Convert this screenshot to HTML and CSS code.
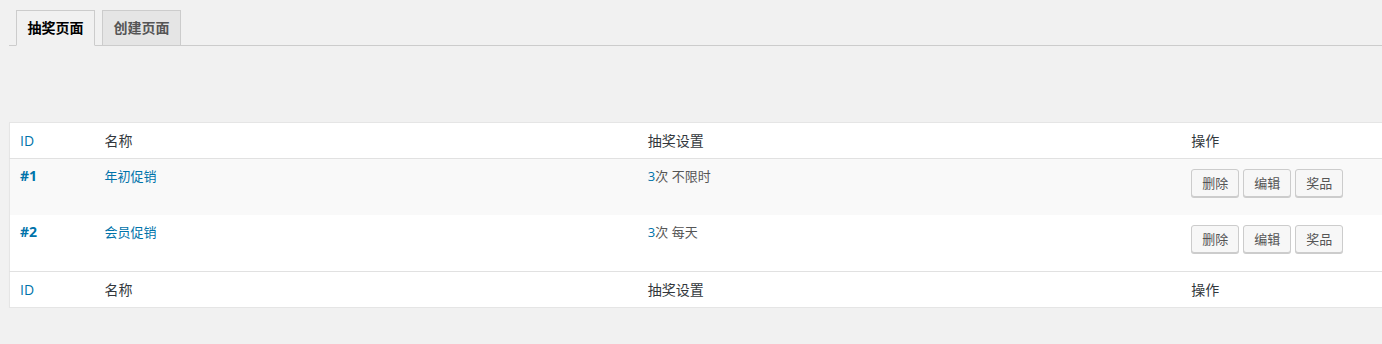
FILE: index.html
```html
<!DOCTYPE html>
<html lang="zh">
<head>
<meta charset="utf-8">
<title>抽奖页面</title>
<link rel="stylesheet" href="styles.css">
</head>
<body>
<div class="wrap">
  <div class="nav-tab-wrapper">
    <a class="nav-tab nav-tab-active">抽奖页面</a>
    <a class="nav-tab">创建页面</a>
  </div>
  <table class="list-table">
    <colgroup>
      <col class="c-id"><col class="c-wide"><col class="c-wide"><col class="c-wide">
    </colgroup>
    <thead>
      <tr><th class="sort">ID</th><th>名称</th><th>抽奖设置</th><th>操作</th></tr>
    </thead>
    <tbody>
      <tr class="alt">
        <td><a class="id-link">#1</a></td>
        <td><a class="name-link">年初促销</a></td>
        <td class="setting"><span class="num">3</span>次 不限时</td>
        <td class="actions"><div class="btns"><span class="button">删除</span><span class="button">编辑</span><span class="button">奖品</span></div></td>
      </tr>
      <tr>
        <td><a class="id-link">#2</a></td>
        <td><a class="name-link">会员促销</a></td>
        <td class="setting"><span class="num">3</span>次 每天</td>
        <td class="actions"><div class="btns"><span class="button">删除</span><span class="button">编辑</span><span class="button">奖品</span></div></td>
      </tr>
    </tbody>
    <tfoot>
      <tr><th class="sort">ID</th><th>名称</th><th>抽奖设置</th><th>操作</th></tr>
    </tfoot>
  </table>
</div>
</body>
</html>
```
FILE: styles.css
```css
html, body {
  margin: 0;
  padding: 0;
  background: #f1f1f1;
  overflow: hidden;
}
body {
  font-family: "Open Sans", "Noto Sans CJK SC", "Liberation Sans", sans-serif;
  color: #444;
  font-size: 13px;
}
.wrap {
  padding: 10px 0 0 9px;
  width: 1800px;
}
.nav-tab-wrapper {
  display: flex;
  align-items: flex-end;
  border-bottom: 1px solid #ccc;
  padding-left: 7px;
  gap: 7px;
  width: 1373px;
}
.nav-tab {
  display: block;
  box-sizing: border-box;
  height: 35px;
  width: 79px;
  text-align: center;
  border: 1px solid #ccc;
  border-bottom: none;
  background: #e5e5e5;
  color: #555;
  font-size: 14px;
  font-weight: 700;
  line-height: 34px;
  text-decoration: none;
}
.nav-tab-active {
  background: #f1f1f1;
  color: #000;
  height: 36px;
  margin-bottom: -1px;
  border-bottom: 1px solid #f1f1f1;
}
.list-table {
  margin-top: 76px;
  border-collapse: collapse;
  table-layout: fixed;
  width: 1716px;
  background: #fff;
  border: 1px solid #e5e5e5;
  box-shadow: 0 1px 1px rgba(0, 0, 0, 0.04);
}
.c-id { width: 85px; }
.c-wide { width: 543px; }
.list-table th {
  text-align: left;
  font-weight: 400;
  font-size: 14px;
  color: #32373c;
  height: 35px;
  padding: 0 10px;
  line-height: 20px;
}
.list-table thead th { border-bottom: 1px solid #e1e1e1; }
.list-table tfoot th { border-top: 1px solid #e1e1e1; }
.list-table th.sort { color: #0073aa; }
.list-table td {
  height: 56px;
  padding: 0 10px;
  vertical-align: top;
  box-sizing: border-box;
}
.list-table td > a,
.list-table td.setting {
  display: block;
  padding-top: 7px;
  line-height: 20px;
}
tr.alt td { background: #f9f9f9; }
.id-link {
  color: #0073aa;
  font-weight: 700;
  font-size: 14px;
}
.name-link { color: #0073aa; }
.setting { color: #555; }
.num { color: #0073aa; }
.btns {
  display: flex;
  gap: 4px;
  padding-top: 10px;
}
.button {
  display: block;
  box-sizing: border-box;
  height: 28px;
  width: 48px;
  text-align: center;
  line-height: 26px;
  font-size: 13px;
  color: #555;
  background: #f7f7f7;
  border: 1px solid #ccc;
  border-radius: 3px;
  box-shadow: 0 1px 0 #ccc;
}
```
